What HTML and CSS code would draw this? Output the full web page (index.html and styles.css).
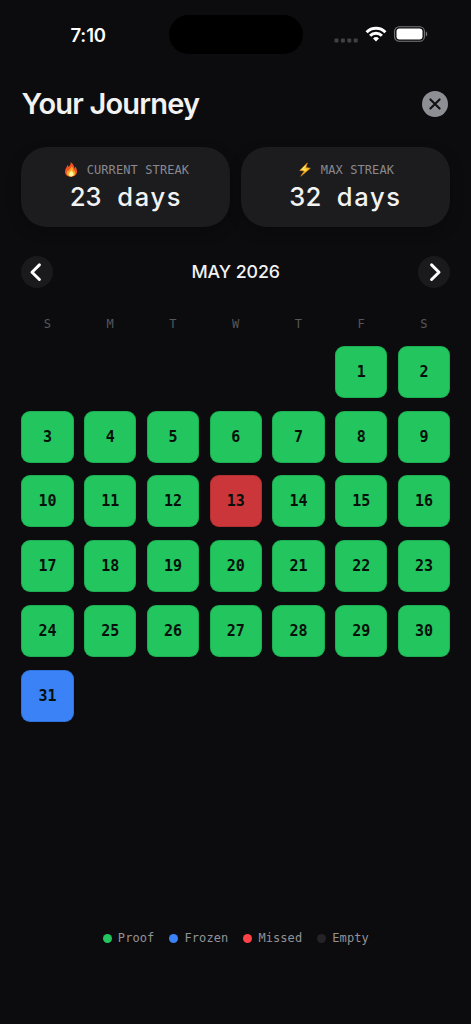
FILE: index.html
```html
<!DOCTYPE html>
<html lang="en">
<head>
<meta charset="utf-8">
<title>Your Journey</title>
<link rel="stylesheet" href="styles.css">
</head>
<body>
<div class="screen">
  <div class="status">
    <div class="time">7:10</div>
    <div class="island"></div>
    <div class="indicators">
      <svg width="25" height="5" viewBox="0 0 25 5" fill="#414143"><rect x="0.5" y="0.5" width="4" height="4" rx="1"/><rect x="6.9" y="0.5" width="4" height="4" rx="1"/><rect x="13.3" y="0.5" width="4" height="4" rx="1"/><rect x="19.7" y="0.5" width="4" height="4" rx="1"/></svg>
      <svg class="wifi" width="22" height="16" viewBox="0 0 22 16" fill="none" stroke="#fff" stroke-width="3"><path d="M1.6 6.2a13.2 13.2 0 0 1 18.8 0"/><path d="M5.1 9.8a8.3 8.3 0 0 1 11.8 0"/><path d="M11 15.6l-3-3.1a4.3 4.3 0 0 1 6 0z" fill="#fff" stroke="none"/></svg>
      <svg width="34" height="16" viewBox="0 0 34 16"><rect x="0.6" y="0.7" width="29.8" height="14.6" rx="4.6" fill="none" stroke="#77777a" stroke-width="1.1"/><rect x="2.5" y="2.5" width="26" height="11" rx="3" fill="#fff"/><path d="M31.8 5.6c1.9.6 1.9 4.2 0 4.8z" fill="#77777a"/></svg>
    </div>
  </div>

  <header class="header">
    <h1>Your Journey</h1>
    <svg width="26" height="26" viewBox="0 0 26 26"><circle cx="13" cy="13" r="13" fill="#8e8e95"/><path d="M8.4 8.4l9.2 9.2M17.6 8.4l-9.2 9.2" stroke="#111113" stroke-width="2.1" stroke-linecap="round"/></svg>
  </header>

  <div class="stats">
    <div class="card">
      <div class="label">
        <svg width="14" height="15" viewBox="0 0 14 15"><path d="M6.6.3c.4 2-.5 3.2-1.9 4.6C4.300 4.100 4 3.600 3.400 3.100 3.500 4.900 1 6.600 1 9.700 1 12.800 3.600 14.700 7 14.700s6-2 6-5.200c0-2-1-3.400-1.300-5-.6.7-.8 1.400-.9 2.200C9.900 3.900 9.100 1.500 6.600.3z" fill="#f4511e"/><path d="M7.300 4.200c.3 2-2.300 3-3.300 5.300-.3-.5-.5-.9-.6-1.400-1.600 3.600 0 6.400 3.600 6.400 3.800 0 5.200-3 3.700-6-.2.6-.5 1-.9 1.300C9.800 7.500 9 5.300 7.300 4.200z" fill="#ffa726"/><path d="M7.200 8.200c-.1 1.600-2.400 2.300-2.400 4.100 0 1.300.9 2.200 2.300 2.200s2.500-.9 2.500-2.200c0-1.700-1.400-2.500-2.400-4.100z" fill="#fff59d"/></svg>
        <span>CURRENT STREAK</span>
      </div>
      <div class="value"><span class="count">23</span> days</div>
    </div>
    <div class="card">
      <div class="label">
        <svg width="14" height="15" viewBox="0 0 14 15"><path d="M9.300.9L1.800 8.400l4.500.5-3.500 5.300 9.500-7.900-4.500-.7z" fill="#ffca28" stroke="#e58a12" stroke-width=".7" stroke-linejoin="round"/><path d="M7.300 3.900L4.200 7.500l3.600.4" fill="none" stroke="#fff3a0" stroke-width=".9"/></svg>
        <span>MAX STREAK</span>
      </div>
      <div class="value"><span class="count">32</span> days</div>
    </div>
  </div>

  <div class="month">
    <div class="nav"><svg width="32" height="32" viewBox="0 0 32 32"><path d="M18.400 8.900L11 16.200l7.400 7.300"/></svg></div>
    <div class="month-name">MAY 2026</div>
    <div class="nav"><svg width="32" height="32" viewBox="0 0 32 32"><path d="M13.600 8.900L21 16.200l-7.400 7.300"/></svg></div>
  </div>

  <div class="weekdays"><span>S</span><span>M</span><span>T</span><span>W</span><span>T</span><span>F</span><span>S</span></div>

  <div class="days">
    <div class="day first">1</div><div class="day">2</div>
    <div class="day">3</div><div class="day">4</div><div class="day">5</div><div class="day">6</div><div class="day">7</div><div class="day">8</div><div class="day">9</div>
    <div class="day">10</div><div class="day">11</div><div class="day">12</div><div class="day missed">13</div><div class="day">14</div><div class="day">15</div><div class="day">16</div>
    <div class="day">17</div><div class="day">18</div><div class="day">19</div><div class="day">20</div><div class="day">21</div><div class="day">22</div><div class="day">23</div>
    <div class="day">24</div><div class="day">25</div><div class="day">26</div><div class="day">27</div><div class="day">28</div><div class="day">29</div><div class="day">30</div>
    <div class="day frozen">31</div>
  </div>

  <footer class="legend">
    <span class="key"><i class="dot proof"></i>Proof</span>
    <span class="key"><i class="dot ice"></i>Frozen</span>
    <span class="key"><i class="dot miss"></i>Missed</span>
    <span class="key"><i class="dot empty"></i>Empty</span>
  </footer>
</div>
</body>
</html>
```
FILE: styles.css
```css
* { box-sizing: border-box; }
body { margin: 0; background: #0c0c0e; color: #f2f2f2; font-family: Inter, sans-serif; }
svg { display: block; flex: none; }
.screen { width: 471px; height: 1024px; padding: 0 21px 0 21.400px; display: flex; flex-direction: column; overflow: hidden; }

.status { height: 54px; padding-top: 15px; display: grid; grid-template-columns: 147.500px 134px 1fr; }
.time { padding-left: 49px; font-size: 18.500px; line-height: 40px; font-weight: 600; letter-spacing: -.1px; color: #fff; }
.island { height: 39px; border-radius: 20px; background: #000; }
.indicators { display: flex; align-items: flex-start; padding: 11px 0 0 31px; }
.indicators svg:first-child { margin-top: 12px; }
.wifi { margin: 0 7px 0 6px; }

.header { height: 68px; margin-top: 15px; display: flex; align-items: center; justify-content: space-between; padding: 1px 2.500px 0 0; }
h1 { margin: 0; font-size: 29px; font-weight: 600; letter-spacing: -.8px; line-height: 36px; padding-top: 1px; }

.stats { display: grid; grid-template-columns: 1fr 1fr; gap: 10.500px; margin-top: 10px; }
.card { height: 80px; border-radius: 26px; background: #1c1c1f; display: flex; flex-direction: column; align-items: center; padding-top: 14px; box-shadow: 0 5px 14px rgba(0,0,0,.25); }
.label { display: flex; gap: 9px; height: 17px; align-items: center; padding-left: 1px; font: 12px "DejaVu Sans Mono", monospace; letter-spacing: .1px; color: #89898f; }
.value { font-size: 25.500px; line-height: 38px; font-weight: 500; font-feature-settings: "tnum"; letter-spacing: 1.700px; word-spacing: 7px; }
.count { letter-spacing: -.5px; }

.month { margin-top: 28px; height: 33px; display: flex; align-items: center; justify-content: space-between; }
.nav { width: 32px; height: 32px; border-radius: 50%; background: #1a1a1c; }
.nav path { fill: none; stroke: #fff; stroke-width: 3; stroke-linecap: round; stroke-linejoin: round; }
.month-name { font-size: 17.800px; font-weight: 500; letter-spacing: -.1px; }

.weekdays { display: grid; grid-template-columns: repeat(7, 1fr); column-gap: 10.600px; margin-top: 27px; height: 18px; text-align: center; font: 12px/18px "DejaVu Sans Mono", monospace; color: #56565b; }

.days { display: grid; grid-template-columns: repeat(7, 1fr); grid-auto-rows: 52px; gap: 12.850px 10.600px; margin-top: 12.800px; }
.day { border-radius: 9px; background: #22c55e; color: #06100a; display: flex; align-items: center; justify-content: center; font: bold 15px "DejaVu Sans Mono", monospace; box-shadow: inset 0 0 0 1px rgba(0,0,0,.12); }
.first { grid-column: 6; }
.missed { background: #cb363a; }
.frozen { background: #3b82f6; }

.legend { margin-top: auto; margin-bottom: 77px; display: flex; justify-content: center; gap: 14.800px; font: 12px/18px "DejaVu Sans Mono", monospace; letter-spacing: .08px; color: #929297; }
.key { display: flex; align-items: center; gap: 6.300px; }
.dot { width: 9px; height: 9px; border-radius: 50%; }
.proof { background: #22c55e; }
.ice { background: #3b82f6; }
.miss { background: #ff4245; }
.empty { background: #242426; }
```
